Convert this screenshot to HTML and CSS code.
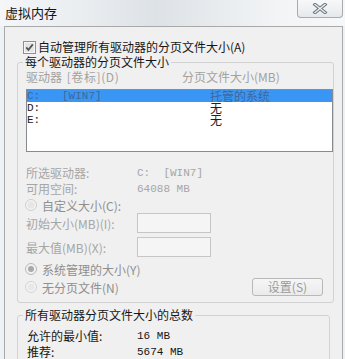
FILE: index.html
```html
<!DOCTYPE html>
<html lang="zh-CN">
<head>
<meta charset="utf-8">
<title>虚拟内存</title>
<link rel="stylesheet" href="styles.css">
</head>
<body>
<div class="window">
  <div class="titlebar">
    <span class="title">虚拟内存</span>
    <div class="close">
      <svg width="16" height="11" viewBox="0 0 16 11">
        <path d="M3 1.5 L13 9.5 M13 1.5 L3 9.5" fill="none" stroke="#6a737c" stroke-width="3.4" stroke-linecap="square"/>
        <path d="M3 1.5 L13 9.5 M13 1.5 L3 9.5" fill="none" stroke="#eef1f3" stroke-width="1.4" stroke-linecap="square"/>
      </svg>
    </div>
  </div>
  <div class="panel">
    <div class="check-row">
      <svg class="checkbox" width="13" height="13" viewBox="0 0 13 13">
        <rect x="0.5" y="0.5" width="12" height="12" fill="#f6f6f6" stroke="#8e8f8f"/>
        <rect x="2" y="2" width="9" height="9" fill="#e4e4e4"/>
        <path d="M3.2 6.4 L5.4 8.8 L9.8 3.4" fill="none" stroke="#555" stroke-width="1.8"/>
      </svg>
      <span>自动管理所有驱动器的分页文件大小(A)</span>
    </div>

    <fieldset class="group group-drives">
      <legend>每个驱动器的分页文件大小</legend>
      <div class="list-head"><span>驱动器 <span class="bracket">[卷标](D)</span></span><span>分页文件大小(MB)</span></div>
      <div class="listbox">
        <div class="list-row selected"><span class="mono">C:</span><span class="mono">[WIN7]</span><span>托管的系统</span></div>
        <div class="list-row"><span class="mono">D:</span><span></span><span>无</span></div>
        <div class="list-row"><span class="mono">E:</span><span></span><span>无</span></div>
      </div>

      <div class="info">
        <span>所选驱动器:</span><span class="mono">C:  [WIN7]</span>
        <span>可用空间:</span><span class="mono">64088 MB</span>
      </div>

      <div class="radio-row">
        <svg width="12" height="12" viewBox="0 0 12 12"><circle cx="6" cy="6" r="5.5" fill="#f3f3f3" stroke="#cfcfcf"/><circle cx="6" cy="6" r="3.5" fill="#e6e6e6"/></svg>
        <span>自定义大小(C):</span>
      </div>
      <div class="field-row">
        <span>初始大小(MB)(I):</span><span class="textbox"></span>
      </div>
      <div class="field-row second">
        <span>最大值(MB)(X):</span><span class="textbox"></span>
      </div>

      <div class="radio-row sys">
        <svg width="12" height="12" viewBox="0 0 12 12"><circle cx="6" cy="6" r="5.5" fill="#f1f1f1" stroke="#b9b9b9"/><circle cx="6" cy="6" r="3" fill="#a9a9a9"/></svg>
        <span>系统管理的大小(Y)</span>
      </div>
      <div class="last-row">
        <div class="radio-row">
          <svg width="12" height="12" viewBox="0 0 12 12"><circle cx="6" cy="6" r="5.5" fill="#f3f3f3" stroke="#d3d3d3"/><circle cx="6" cy="6" r="3.5" fill="#e8e8e8"/></svg>
          <span>无分页文件(N)</span>
        </div>
        <span class="button">设置(S)</span>
      </div>
    </fieldset>

    <fieldset class="group group-total">
      <legend>所有驱动器分页文件大小的总数</legend>
      <div class="totals">
        <span>允许的最小值:</span><span class="mono">16 MB</span>
        <span>推荐:</span><span class="mono">5674 MB</span>
      </div>
    </fieldset>
  </div>
</div>
</body>
</html>
```

FILE: styles.css
```css
* { box-sizing: border-box; }
html, body { margin: 0; padding: 0; }
body {
  width: 345px;
  height: 359px;
  overflow: hidden;
  background: #eef2f5;
  font-family: "Noto Sans CJK SC", "Noto Sans", sans-serif;
  font-size: 12px;
  color: #1c1c1c;
}
.mono { font-family: "Liberation Mono", "Noto Sans CJK SC", monospace; font-size: 11px; white-space: pre; }

.titlebar {
  height: 26px;
  display: flex;
  justify-content: space-between;
  align-items: flex-start;
  background: linear-gradient(90deg, #f4f6f8 0%, #e9edf0 25%, #dde2e6 45%, #e6eaed 60%, #f2f4f6 80%, #f5f7f8 100%);
}
.title { padding: 5px 0 0 5px; font-size: 13px; line-height: 16px; color: #141414; }
.close {
  width: 46px;
  height: 18px;
  margin-right: 2px;
  border: 1px solid #a6acb2;
  border-top: none;
  border-radius: 0 0 4px 4px;
  background: linear-gradient(#f7f8f9, #e6e9ec);
  display: flex;
  align-items: center;
  justify-content: center;
}

.panel {
  margin-left: 4px;
  width: 339px;
  height: 333px;
  overflow: hidden;
  border: 1px solid #a9a9a9;
  border-bottom: none;
  background: #f0f0f0;
  padding: 13px 0 0 12px;
}
.check-row {
  height: 14px;
  padding-left: 6px;
  display: flex;
  align-items: center;
  gap: 2px;
  line-height: 14px;
  color: #161616;
}
.checkbox { flex: none; }

.group {
  margin: 0;
  border: 1px solid #d2d2d2;
  border-radius: 3px;
  min-width: 0;
}
.group legend {
  padding: 0 2px;
  line-height: 12px;
  font-size: 12px;
  color: #161616;
}
.group-drives { width: 317px; margin-top: 2px; padding: 3px 0 5px 8px; }
.group-drives legend { margin-left: -3px; }
.group-total { width: 313px; margin-top: 6px; padding: 7px 0 20px 9px; }
.group-total legend { margin-left: -4px; }

.list-head {
  display: grid;
  grid-template-columns: 156px 1fr;
  line-height: 12px;
  color: #a2a2a2;
}
.bracket { margin-left: 2px; letter-spacing: 0.6px; }
.listbox {
  margin-top: 6px;
  height: 63px;
  border: 1px solid #868b92;
  background: #ffffff;
}
.list-row {
  display: grid;
  grid-template-columns: 35px 148px 1fr;
  height: 12px;
  line-height: 12px;
  color: #202020;
}
.list-row.selected { background: #3a96f5; color: #41679c; }

.info {
  margin-top: 13px;
  display: grid;
  grid-template-columns: 111px 1fr;
  line-height: 16px;
  color: #a6a6a6;
}
.radio-row {
  height: 16px;
  margin-left: -1px;
  display: flex;
  align-items: center;
  gap: 5px;
  color: #8f8f8f;
}
.radio-row svg { flex: none; }
.field-row {
  display: grid;
  grid-template-columns: 111px 74px;
  align-items: center;
  height: 20px;
  color: #a6a6a6;
}
.field-row.second { margin-top: 4px; }
.textbox {
  height: 20px;
  border: 1px solid #c6c6c6;
  background: #f5f5f5;
}
.radio-row.sys { margin-top: 4px; }
.last-row {
  height: 20px;
  display: flex;
  align-items: center;
  justify-content: space-between;
}
.button {
  width: 71px;
  height: 18px;
  margin-right: 10px;
  border: 1px solid #b8b8b8;
  border-radius: 3px;
  background: linear-gradient(#f6f6f6, #ebebeb);
  color: #9a9a9a;
  display: flex;
  align-items: center;
  justify-content: center;
  line-height: 16px;
}

.totals {
  display: grid;
  grid-template-columns: 110px 1fr;
  line-height: 16px;
  color: #161616;
}
```
